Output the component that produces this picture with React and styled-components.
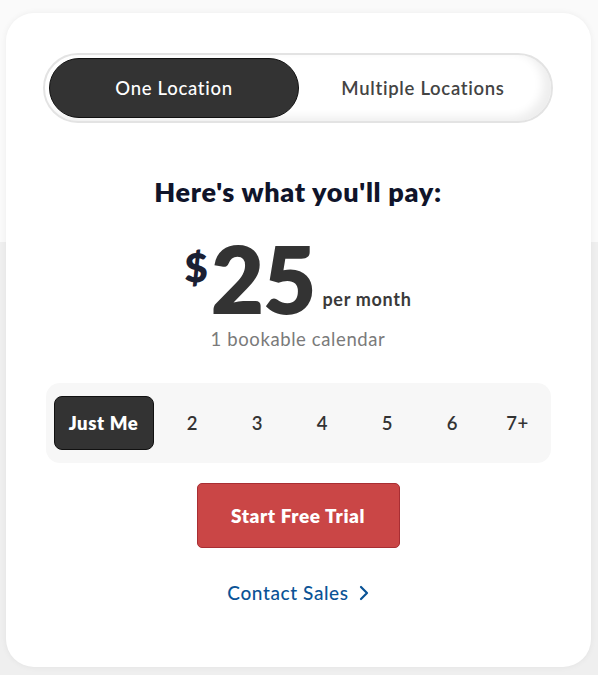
import React, { useState } from "react";
import styled, { createGlobalStyle } from "styled-components";

const Global = createGlobalStyle`
  html, body { margin: 0; padding: 0; }
  body {
    font-family: Lato, "Open Sans", Arial, sans-serif;
    background: linear-gradient(to bottom, #fafafa 0, #fafafa 242px, #efefef 242px, #efefef 100%);
    min-height: 675px;
  }
`;

const Page = styled.div`
  padding: 13px 7px 0 6px;
  display: flex;
  justify-content: center;
`;

const Card = styled.div`
  width: 585px;
  height: 654px;
  box-sizing: border-box;
  background: #fff;
  border-radius: 28px;
  box-shadow: 0 0 6px rgba(0, 0, 0, 0.06);
  padding: 40px 38px 0 37px;
  display: flex;
  flex-direction: column;
  align-items: center;
`;

const Toggle = styled.div`
  width: 510px;
  height: 70px;
  box-sizing: border-box;
  border-radius: 35px;
  border: 2px solid #e3e3e3;
  background: #fff;
  box-shadow: inset -8px -4px 10px rgba(0, 0, 0, 0.07);
  padding: 3px 4px;
  display: flex;
`;

const ToggleOption = styled.button`
  flex: ${(p) => (p.$active ? "0 0 250px" : "1")};
  height: 60px;
  border-radius: 30px;
  border: ${(p) => (p.$active ? "1px solid #111" : "none")};
  background: ${(p) => (p.$active ? "#333333" : "transparent")};
  color: ${(p) => (p.$active ? "#fff" : "#444")};
  font-family: inherit;
  font-size: 18.5px;
  letter-spacing: 0.7px;
  font-weight: ${(p) => (p.$active ? 500 : 600)};
  cursor: pointer;
  padding: 0;
`;

const Heading = styled.h2`
  margin: 52px 0 0;
  font-size: 27px;
  line-height: 34px;
  font-weight: 800;
  color: #10142a;
  letter-spacing: 0.7px;
`;

const PriceRow = styled.div`
  margin-top: 32px;
  display: flex;
  align-items: flex-start;
  height: 76px;
`;

const Currency = styled.span`
  font-size: 40px;
  font-weight: 800;
  color: #1b2033;
  line-height: 1;
  margin-top: 6px;
  margin-right: 3px;
`;

const Amount = styled.span`
  font-size: 92px;
  font-weight: 800;
  color: #333;
  line-height: 76px;
  letter-spacing: -1px;
`;

const Period = styled.span`
  align-self: flex-end;
  font-size: 18px;
  font-weight: 700;
  color: #3a3a3a;
  letter-spacing: 0.7px;
  margin-left: 7px;
  margin-bottom: 7px;
`;

const Subtitle = styled.div`
  margin-top: 10px;
  font-size: 18.5px;
  color: #7a7a7a;
  line-height: 24px;
  letter-spacing: 0.6px;
`;

const Seats = styled.div`
  margin-top: 32px;
  width: 505px;
  height: 80px;
  box-sizing: border-box;
  background: #f7f7f7;
  border-radius: 14px;
  padding: 0 7px 0 8px;
  display: flex;
  align-items: center;
  justify-content: space-between;
`;

const Seat = styled.button`
  width: ${(p) => (p.$wide ? "100px" : "52px")};
  height: 54px;
  box-sizing: border-box;
  border-radius: 8px;
  border: ${(p) => (p.$active ? "1px solid #111" : "none")};
  background: ${(p) => (p.$active ? "#333333" : "transparent")};
  color: ${(p) => (p.$active ? "#fff" : "#333")};
  font-family: inherit;
  font-size: 18.5px;
  letter-spacing: 0.6px;
  font-weight: ${(p) => (p.$active ? 800 : 600)};
  cursor: pointer;
  padding: 0;
`;

const TrialButton = styled.button`
  margin-top: 20px;
  width: 203px;
  height: 65px;
  border-radius: 5px;
  border: 1px solid #a82e33;
  background: #ca4646;
  color: #fff;
  font-family: inherit;
  font-size: 19px;
  letter-spacing: 0.6px;
  font-weight: 800;
  cursor: pointer;
`;

const ContactLink = styled.a`
  margin-top: 33px;
  display: flex;
  align-items: center;
  gap: 10px;
  color: #0a5396;
  font-size: 19px;
  letter-spacing: 0.6px;
  font-weight: 500;
  text-decoration: none;
  line-height: 24px;
`;

export default function App() {
  const [loc, setLoc] = useState("one");
  const [seat, setSeat] = useState("Just Me");
  const seats = ["Just Me", "2", "3", "4", "5", "6", "7+"];
  return (
    <>
      <Global />
      <Page>
        <Card>
          <Toggle>
            <ToggleOption $active={loc === "one"} onClick={() => setLoc("one")}>
              One Location
            </ToggleOption>
            <ToggleOption $active={loc === "multi"} onClick={() => setLoc("multi")}>
              Multiple Locations
            </ToggleOption>
          </Toggle>
          <Heading>Here's what you'll pay:</Heading>
          <PriceRow>
            <Currency>$</Currency>
            <Amount>25</Amount>
            <Period>per month</Period>
          </PriceRow>
          <Subtitle>1 bookable calendar</Subtitle>
          <Seats>
            {seats.map((s) => (
              <Seat
                key={s}
                $wide={s === "Just Me"}
                $active={seat === s}
                onClick={() => setSeat(s)}
              >
                {s}
              </Seat>
            ))}
          </Seats>
          <TrialButton>Start Free Trial</TrialButton>
          <ContactLink href="#">
            Contact Sales
            <svg width="10" height="16" viewBox="0 0 10 16" fill="none">
              <path d="M2 2l6 6-6 6" stroke="#0a5396" strokeWidth="2.2" strokeLinecap="round" strokeLinejoin="round" />
            </svg>
          </ContactLink>
        </Card>
      </Page>
    </>
  );
}
